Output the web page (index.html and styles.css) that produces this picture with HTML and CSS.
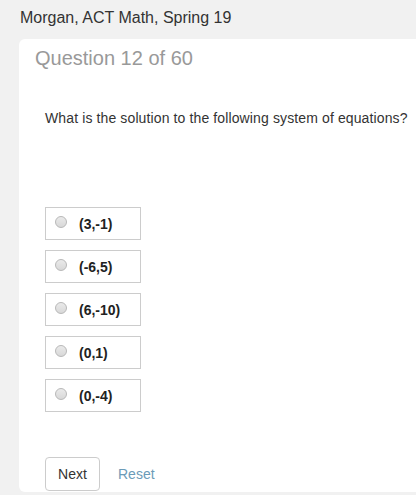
FILE: index.html
```html
<!DOCTYPE html>
<html>
<head>
<meta charset="utf-8">
<link rel="stylesheet" href="styles.css">
</head>
<body>
<div class="page">
  <h1 class="title">Morgan, ACT Math, Spring 19</h1>
  <div class="card">
    <h2 class="qnum">Question 12 of 60</h2>
    <p class="qtext">What is the solution to the following system of equations?</p>
    <div class="options">
      <label class="opt"><span class="radio"></span><span class="ans">(3,-1)</span></label>
      <label class="opt"><span class="radio"></span><span class="ans">(-6,5)</span></label>
      <label class="opt"><span class="radio"></span><span class="ans">(6,-10)</span></label>
      <label class="opt"><span class="radio"></span><span class="ans">(0,1)</span></label>
      <label class="opt"><span class="radio"></span><span class="ans">(0,-4)</span></label>
    </div>
    <div class="actions">
      <button class="btn">Next</button>
      <a class="reset">Reset</a>
    </div>
  </div>
</div>
</body>
</html>
```
FILE: styles.css
```css
html, body {
  margin: 0;
  padding: 0;
  background: #f1f1f1;
  font-family: "Liberation Sans", Arial, sans-serif;
  color: #333;
  overflow: hidden;
}
.page {
  padding: 0 0 0 19px;
  height: 495px;
}
.title {
  margin: 0;
  font-size: 16px;
  font-weight: normal;
  color: #333;
  line-height: 20px;
  padding: 8px 0 0 1px;
  height: 33px;
  box-sizing: border-box;
}
.card {
  margin-top: 6px;
  background: #fff;
  border-radius: 6px 0 0 6px;
  height: 453px;
  padding: 0 0 0 16px;
}
.qnum {
  margin: 0;
  font-size: 20px;
  font-weight: normal;
  color: #999;
  line-height: 24px;
  padding-top: 7px;
}
.qtext {
  margin: 0;
  padding: 40px 0 0 10px;
  font-size: 14px;
  letter-spacing: 0.12px;
  line-height: 16px;
  color: #333;
}
.options {
  display: flex;
  flex-direction: column;
  gap: 10px;
  padding: 81px 0 0 10px;
}
.opt {
  display: flex;
  align-items: center;
  width: 96px;
  height: 33px;
  box-sizing: border-box;
  border: 1px solid #ccc;
  padding-left: 9px;
}
.radio {
  width: 12px;
  height: 12px;
  border-radius: 50%;
  box-sizing: border-box;
  border: 1px solid #b8b8b8;
  background: linear-gradient(#eaeaea, #d8d8d8);
  margin-top: -3px;
}
.ans {
  margin-left: 12px;
  font-size: 14px;
  font-weight: bold;
  color: #222;
}
.actions {
  display: flex;
  align-items: center;
  padding: 45px 0 0 10px;
}
.btn {
  width: 55px;
  height: 34px;
  background: #fff;
  border: 1px solid #ccc;
  border-radius: 4px;
  font-family: "Liberation Sans", Arial, sans-serif;
  font-size: 14px;
  color: #333;
  padding: 0;
}
.reset {
  margin-left: 18px;
  font-size: 14px;
  color: #6b9bb8;
}
```
